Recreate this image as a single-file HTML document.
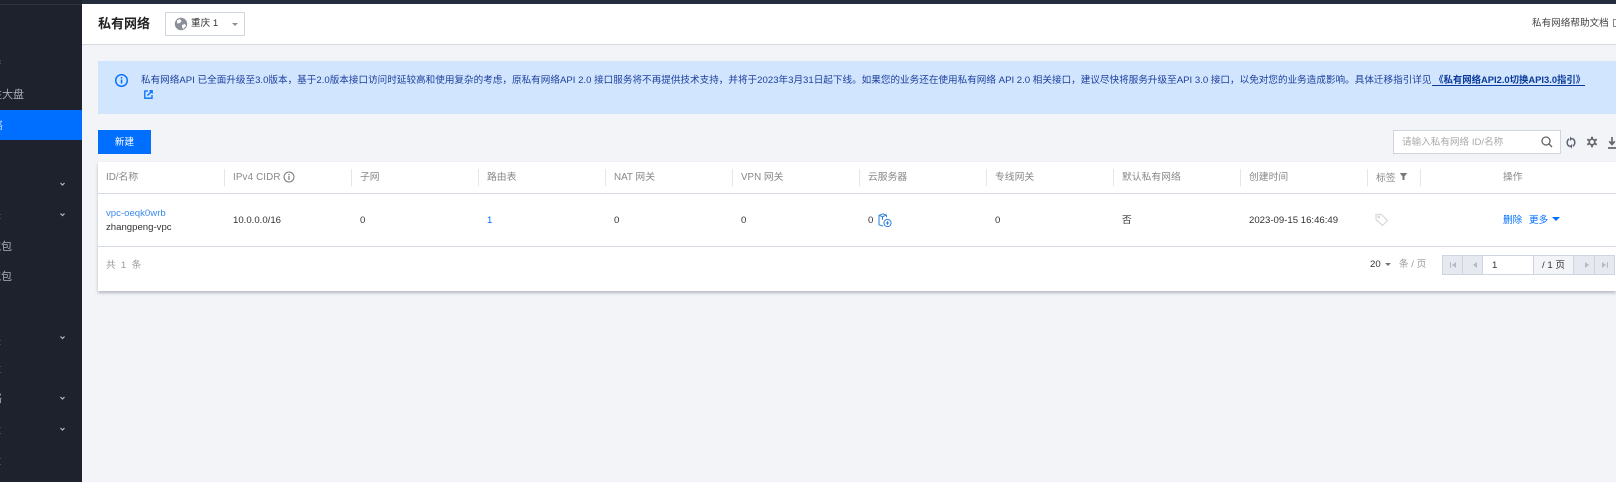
<!DOCTYPE html>
<html lang="zh"><head><meta charset="utf-8"><style>
*{box-sizing:border-box}
html,body{margin:0;padding:0}
body{width:1616px;height:482px;overflow:hidden;position:relative;background:#f2f4f8;font-family:"Liberation Sans","Noto Sans CJK SC",sans-serif;font-size:9.6px;color:#333}
.a{position:absolute;white-space:nowrap}
.th{top:171px;color:#888;line-height:14px;font-size:9.8px}
.td{top:214px;line-height:14px;color:#333;font-size:9.6px}
.dv{position:absolute;top:169px;width:1px;height:17px;background:#e4e6ea}
.sb{position:absolute;left:0;top:0;width:82px;height:482px;background:#1e222d;overflow:hidden}
.st{position:absolute;color:#a9aeb5;font-size:11px;line-height:14px;white-space:nowrap}
.pg{position:absolute;top:255px;height:20px;background:#e6e9ef;border:1px solid #cfd5de}
</style></head><body>
<div class="a" style="left:0;top:0;width:1616px;height:4px;background:#252d3d"></div>
<div class="sb">
<div class="a" style="left:0;top:4px;width:82px;height:1px;background:#2c3240"></div>
<div class="a" style="left:0;top:110px;width:82px;height:30px;background:#006eff"></div>
<div class="st" style="left:-10px;top:55px">器</div>
<div class="st" style="left:-9px;top:88px">性大盘</div>
<div class="st" style="left:-8px;top:119px;color:#b9d4ff">络</div>
<div class="st" style="left:-10px;top:240px">宽包</div>
<div class="st" style="left:-10px;top:270px">宽包</div>
<div class="st" style="left:-10px;top:208px">关</div>
<div class="st" style="left:-10px;top:334px">关</div>
<div class="st" style="left:-10px;top:362px">量</div>
<div class="st" style="left:-9px;top:392px">络</div>
<div class="st" style="left:-10px;top:423px">量</div>
<div class="st" style="left:-10px;top:454px">量</div>
<svg class="a" style="left:0;top:0" width="82" height="482" fill="none" stroke="#b6bcc6" stroke-width="1.2">
<path d="M60.500 183l2 2 2-2M60.500 213.500l2 2 2-2M60.500 336.500l2 2 2-2M60.500 397l2 2 2-2M60.500 428l2 2 2-2"/></svg>
</div>

<div class="a" style="left:82px;top:4px;width:1534px;height:41px;background:#fff;border-bottom:1px solid #d5d9e2"></div>
<div class="a" style="left:98px;top:15px;font-size:13px;font-weight:700;line-height:18px;color:#222">私有网络</div>
<div class="a" style="left:165px;top:12px;width:80px;height:24px;background:#fff;border:1px solid #d0d6e0"></div>
<svg class="a" style="left:174px;top:17px" width="14" height="14" viewBox="0 0 14 14"><circle cx="7" cy="7" r="6.200" fill="#8a8f98"/><path d="M3 3.500l3-1.500 1.500 2-1.500 2-3 .5zM8 8l3-1 1 2-3 3-1-2z" fill="#fff"/></svg>
<div class="a" style="left:191px;top:17px;font-size:9.6px;line-height:14px;color:#333">重庆 1</div>
<div class="a" style="left:232px;top:23px;border:3px solid transparent;border-width:3.500px 3px 0;border-top-color:#8a8f98"></div>
<div class="a" style="left:1532px;top:17px;font-size:9.6px;line-height:14px;color:#444">私有网络帮助文档</div>
<div class="a" style="left:1612.500px;top:19px;width:6px;height:8px;border:1px solid #888"></div>

<div class="a" style="left:98px;top:61px;width:1518px;height:53px;background:#d1e5ff"></div>
<svg class="a" style="left:114px;top:73px" width="15" height="15" viewBox="0 0 15 15"><circle cx="7.500" cy="7.500" r="5.800" fill="none" stroke="#006eff" stroke-width="1.400"/><rect x="6.800" y="6.500" width="1.500" height="4" fill="#006eff"/><rect x="6.800" y="4" width="1.500" height="1.500" fill="#006eff"/></svg>
<div class="a" style="left:141px;top:72px;font-size:9.6px;line-height:16px;color:#1d3f9c;letter-spacing:0">私有网络API 已全面升级至3.0版本，基于2.0版本接口访问时延较高和使用复杂的考虑，原私有网络API 2.0 接口服务将不再提供技术支持，并将于2023年3月31日起下线。如果您的业务还在使用私有网络 API 2.0 相关接口，建议尽快将服务升级至API 3.0 接口，以免对您的业务造成影响。具体迁移指引详见<span style="color:#0a3a9a;font-weight:700;font-size:9.4px;border-bottom:1px solid #0a3a9a"> 《私有网络API2.0切换API3.0指引》 </span></div>
<svg class="a" style="left:144px;top:90px" width="9" height="9" viewBox="0 0 9 9" fill="none" stroke="#006eff" stroke-width="1.300"><path d="M4 1H.8v7.200H8V5M3.500 5.500L8 1M5.500.800h2.700v2.700"/></svg>

<div class="a" style="left:98px;top:130px;width:53px;height:24px;background:#006eff;color:#fff;font-size:9.6px;line-height:26px;text-align:center">新建</div>
<div class="a" style="left:1393px;top:130px;width:168px;height:24px;background:#fff;border:1px solid #cfd5de;color:#aaa;font-size:9.6px;line-height:24px;padding-left:8px">请输入私有网络 ID/名称</div>
<svg class="a" style="left:1540px;top:135px" width="76" height="16" viewBox="0 0 76 16" fill="none" stroke="#666" stroke-width="1.300">
<circle cx="6" cy="6" r="4"/><path d="M9 9l3 3"/>
<path d="M29.800 11.500a4.300 4.300 0 0 1-.6-7.600M32.200 3.500a4.300 4.300 0 0 1 .6 7.600" stroke="#5c6470" stroke-width="1.500"/><path d="M30 1.500v4.500l2.500-2.200zM32 9v4.500l-2.500-2.200z" fill="#5c6470" stroke="none"/>
<circle cx="52" cy="7" r="2.800" stroke-width="1.700"/><path d="M52 1.800v1.800M52 10.400v1.800M47.300 4.300l1.700 1M56.700 9.700l-1.700-1M47.300 9.700l1.700-1M56.700 4.300l-1.700 1" stroke-width="2"/>
<path d="M72 2v7M69.200 6.300L72 9.500l2.800-3.200M68 13h8" stroke-width="1.700"/></svg>

<div class="a" style="left:98px;top:162px;width:1518px;height:129px;background:#fff;box-shadow:0 2px 3px rgba(54,58,80,.32)"></div>
<div class="a" style="left:98px;top:193px;width:1518px;height:1px;background:#d5d9e2"></div>
<div class="a" style="left:98px;top:246px;width:1518px;height:1px;background:#d5d9e2"></div>

<div class="dv" style="left:224px"></div><div class="dv" style="left:351px"></div><div class="dv" style="left:478px"></div><div class="dv" style="left:605px"></div><div class="dv" style="left:732px"></div><div class="dv" style="left:859px"></div><div class="dv" style="left:986px"></div><div class="dv" style="left:1113px"></div><div class="dv" style="left:1240px"></div><div class="dv" style="left:1367px"></div><div class="dv" style="left:1420px"></div>

<div class="a th" style="left:106px">ID/名称</div>
<div class="a th" style="left:233px;letter-spacing:.15px">IPv4 CIDR</div>
<svg class="a" style="left:283px;top:171px" width="12" height="12" viewBox="0 0 12 12" fill="none" stroke="#777"><circle cx="6" cy="6" r="5"/><path d="M6 5v4M6 3v1.200" stroke-width="1.200"/></svg>
<div class="a th" style="left:360px">子网</div>
<div class="a th" style="left:487px">路由表</div>
<div class="a th" style="left:614px">NAT 网关</div>
<div class="a th" style="left:741px">VPN 网关</div>
<div class="a th" style="left:868px">云服务器</div>
<div class="a th" style="left:995px">专线网关</div>
<div class="a th" style="left:1122px">默认私有网络</div>
<div class="a th" style="left:1249px">创建时间</div>
<div class="a th" style="left:1376px;top:171.500px">标签</div>
<svg class="a" style="left:1399px;top:172px" width="9" height="9" viewBox="0 0 9 9"><path d="M.8 1h7.400L5.500 4.500V8h-2V4.500z" fill="#777"/></svg>
<div class="a th" style="left:1503px">操作</div>

<div class="a" style="left:106px;top:206.500px;line-height:14px;color:#3b8aee;font-size:9.6px">vpc-oeqk0wrb</div>
<div class="a" style="left:106px;top:220.500px;line-height:14px;font-size:9.6px;color:#333">zhangpeng-vpc</div>
<div class="a td" style="left:233px">10.0.0.0/16</div>
<div class="a td" style="left:360px">0</div>
<div class="a td" style="left:487px;color:#006eff">1</div>
<div class="a td" style="left:614px">0</div>
<div class="a td" style="left:741px">0</div>
<div class="a td" style="left:868px">0</div>
<svg class="a" style="left:878px;top:213px" width="14" height="15" viewBox="0 0 14 15" fill="none" stroke="#2a7fd8" stroke-width="1"><path d="M5 .800l3.500 1.400v2M1 2.300L5 .8 1 2.300zM1 2.300v9.500l4 1.200M1 2.300l3.500 1.400L8 2.200M4.500 3.700v3"/><circle cx="9.500" cy="10" r="3.600"/><path d="M7.800 10h3.400M9.500 8.300v3.400"/></svg>
<div class="a td" style="left:995px">0</div>
<div class="a td" style="left:1122px">否</div>
<div class="a td" style="left:1249px">2023-09-15 16:46:49</div>
<svg class="a" style="left:1375px;top:213px" width="14" height="14" viewBox="0 0 14 14" fill="none" stroke="#d6d8dc" stroke-width="1.200"><path d="M1 1.500h5.500L12.500 7.500 7.500 12.500 1 6.500z"/><circle cx="3.800" cy="4" r=".8"/></svg>
<div class="a td" style="left:1503px;color:#006eff">删除</div>
<div class="a td" style="left:1529px;color:#006eff">更多</div>
<div class="a" style="left:1552px;top:217px;border:4px solid transparent;border-bottom:0;border-top-color:#006eff"></div>

<div class="a" style="left:106px;top:259px;line-height:14px;color:#999;font-size:9.6px;letter-spacing:0">共&nbsp; 1&nbsp; 条</div>
<div class="a" style="left:1370px;top:258px;line-height:14px;color:#333;font-size:9.6px">20</div>
<div class="a" style="left:1385px;top:263px;border:3px solid transparent;border-width:3.500px 3px 0;border-top-color:#777"></div>
<div class="a" style="left:1399px;top:258px;line-height:14px;color:#999;font-size:9.6px">条 / 页</div>

<div class="pg" style="left:1442px;width:21px"></div><div class="pg" style="left:1462px;width:21px"></div>
<div class="pg" style="left:1482px;width:52px;background:#fff"></div>
<div class="pg" style="left:1533px;width:41px;background:#f2f4f8"></div>
<div class="pg" style="left:1573px;width:22px"></div><div class="pg" style="left:1594px;width:21px"></div>
<div class="a" style="left:1492px;top:259px;line-height:14px;font-size:9.6px;color:#333">1</div>
<div class="a" style="left:1542px;top:259px;line-height:14px;font-size:9.6px;color:#333">/ 1 页</div>
<svg class="a" style="left:1442px;top:255px" width="174" height="20" viewBox="0 0 174 20" fill="#b5bac4">
<path d="M8 7h1v6H8zM14 7v6l-4-3zM35 7v6l-4-3zM143 7v6l4-3zM165 7h1v6h-1zM160 7v6l4-3z"/></svg>
</body></html>
